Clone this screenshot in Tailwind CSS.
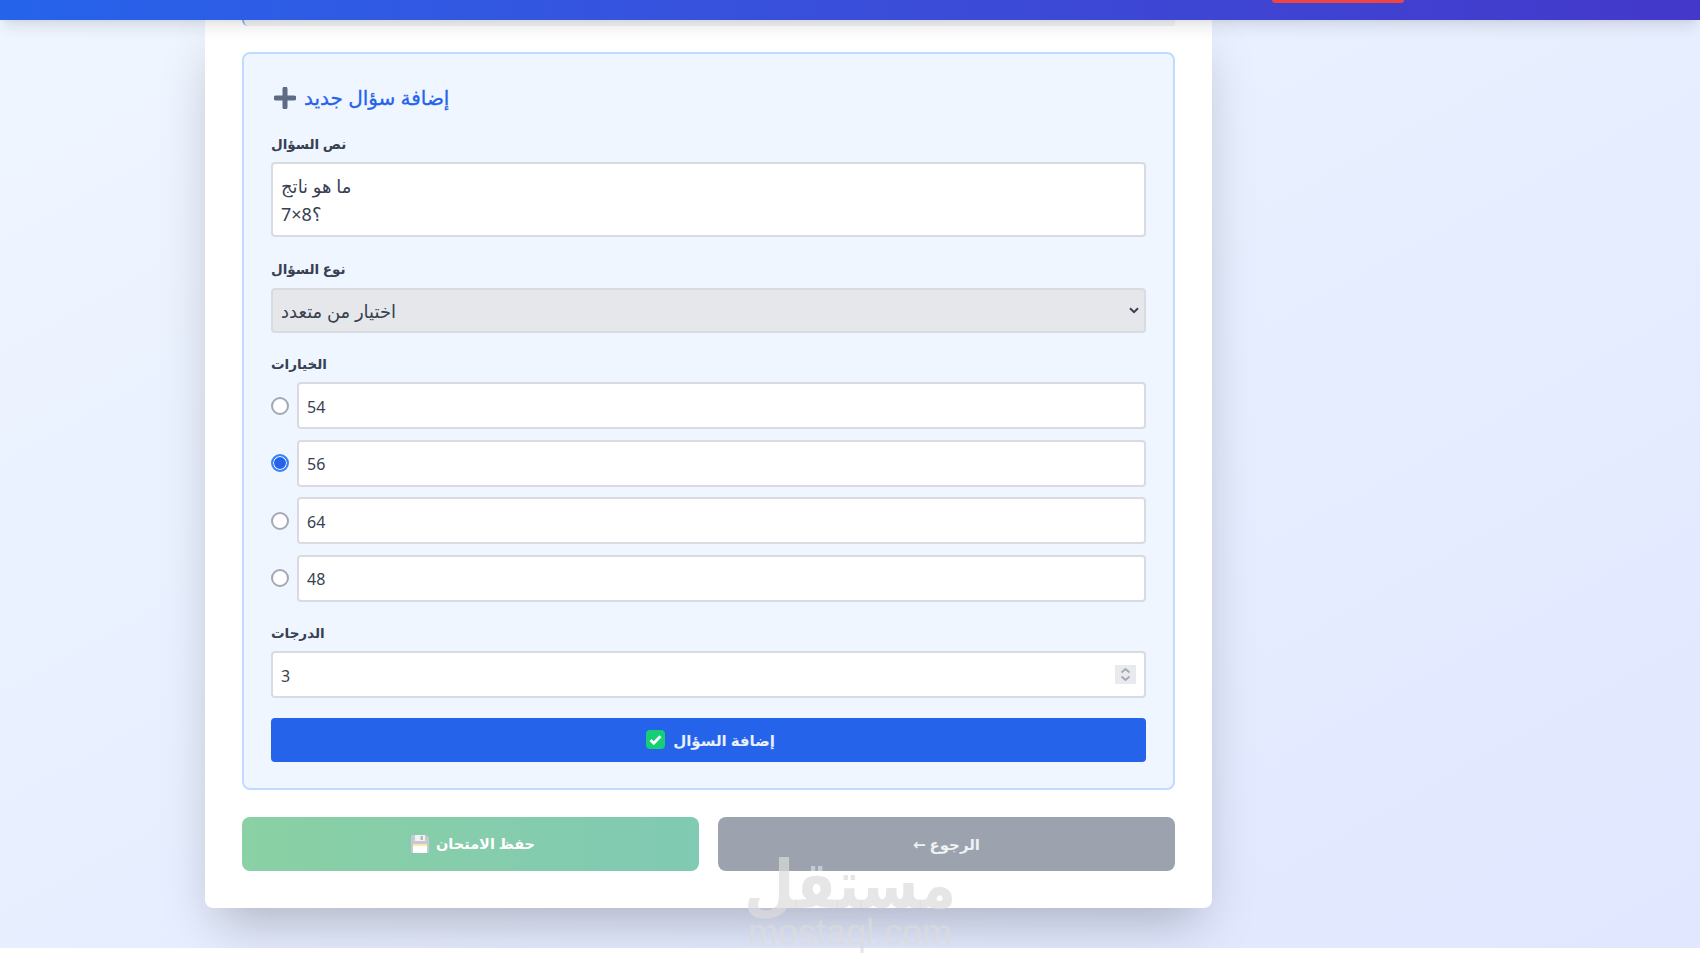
<!DOCTYPE html>
<html lang="ar">
<head>
  <meta charset="utf-8" />
  <title>إضافة سؤال جديد</title>
  <script src="https://cdn.jsdelivr.net/npm/@tailwindcss/browser@4"></script>
</head>
<body class="bg-white font-['Noto_Sans','DejaVu_Sans',sans-serif] text-[#374151]">
  <div class="relative h-[970px] overflow-hidden">
  <div class="h-[948px] overflow-hidden bg-gradient-to-br from-[#eff6ff] to-[#e0e7ff]">
    <!-- الشريط العلوي -->
    <header class="relative z-10 flex h-5 bg-gradient-to-r from-[#2563eb] to-[#4338ca] shadow-lg">
      <div class="ml-[1272px] h-[3px] w-[132px] rounded-b bg-[#ef4444]"></div>
    </header>

    <main class="ml-[205px] w-[1007px] rounded-b-lg bg-white px-[37px] pb-[37px] shadow-2xl">
      <div class="mb-[26px] h-[6px] rounded-bl-lg border-l-2 border-[#93b4f5] bg-[#f3f4f6]"></div>

      <section class="rounded-lg border-2 border-[#bfdbfe] bg-[#eff6ff] px-[27px] pb-[26px] pt-[28px]">
        <h3 class="flex h-8 items-center gap-2 pl-[3px] text-xl font-medium text-[#2563eb] [-webkit-text-stroke:0.3px]">
          <svg class="h-[22px] w-[22px] text-[#5f6b85]" viewBox="0 0 22 22" fill="currentColor"><path d="M8.5 2a2 2 0 0 1 5 0v6.5H20a2.5 2.5 0 0 1 0 5h-6.500V20a2.500 2.500 0 0 1-5 0v-6.500H2a2.500 2.500 0 0 1 0-5h6.500z"/></svg>
          <span>إضافة سؤال جديد</span>
        </h3>

        <label class="mt-5 block h-5 text-[13.5px] font-bold leading-5">نص السؤال</label>
        <textarea rows="2" class="mt-2 block h-[75px] w-full resize-none overflow-hidden rounded border-2 border-[#d9dbe1] bg-white px-2 pb-0 pt-2 text-lg leading-7 outline-none">ما هو ناتج
7×8؟</textarea>

        <label class="mt-[22px] block h-5 text-[13.5px] font-bold leading-5">نوع السؤال</label>
        <div class="relative mt-[9px]">
          <select class="block h-[45px] w-full appearance-none rounded border-2 border-[#d9dbe1] bg-[#e5e7eb] px-2 text-lg">
            <option>اختيار من متعدد</option>
          </select>
          <svg class="pointer-events-none absolute right-[7px] top-[19px] h-[7px] w-[10px]" viewBox="0 0 10 7"><path d="M1 1.200l4 4 4-4" fill="none" stroke="#374151" stroke-width="2"/></svg>
        </div>

        <label class="mt-[21px] block h-5 text-[13.5px] font-bold leading-5">الخيارات</label>
        <div class="mt-2 flex flex-col gap-[10.67px]">
          <div class="flex items-center gap-2">
            <input type="radio" name="answer" class="h-[18px] w-[18px] shrink-0 appearance-none rounded-full border-2 border-[#a3a8b4] bg-white checked:border-[#3b82f6] checked:bg-[#2563eb] checked:shadow-[inset_0_0_0_1px_#fff]" />
            <input type="text" value="54" class="h-[47px] w-full rounded border-2 border-[#d9dbe1] bg-white px-2 pt-[2px] text-base outline-none" />
          </div>
          <div class="flex items-center gap-2">
            <input type="radio" name="answer" checked class="h-[18px] w-[18px] shrink-0 appearance-none rounded-full border-2 border-[#a3a8b4] bg-white checked:border-[#3b82f6] checked:bg-[#2563eb] checked:shadow-[inset_0_0_0_1px_#fff]" />
            <input type="text" value="56" class="h-[47px] w-full rounded border-2 border-[#d9dbe1] bg-white px-2 pt-[2px] text-base outline-none" />
          </div>
          <div class="flex items-center gap-2">
            <input type="radio" name="answer" class="h-[18px] w-[18px] shrink-0 appearance-none rounded-full border-2 border-[#a3a8b4] bg-white checked:border-[#3b82f6] checked:bg-[#2563eb] checked:shadow-[inset_0_0_0_1px_#fff]" />
            <input type="text" value="64" class="h-[47px] w-full rounded border-2 border-[#d9dbe1] bg-white px-2 pt-[2px] text-base outline-none" />
          </div>
          <div class="flex items-center gap-2">
            <input type="radio" name="answer" class="h-[18px] w-[18px] shrink-0 appearance-none rounded-full border-2 border-[#a3a8b4] bg-white checked:border-[#3b82f6] checked:bg-[#2563eb] checked:shadow-[inset_0_0_0_1px_#fff]" />
            <input type="text" value="48" class="h-[47px] w-full rounded border-2 border-[#d9dbe1] bg-white px-2 pt-[2px] text-base outline-none" />
          </div>
        </div>

        <label class="mt-[21px] block h-5 text-[13.5px] font-bold leading-5">الدرجات</label>
        <div class="relative mt-2">
          <input type="number" value="3" class="block h-[47px] w-full appearance-none rounded border-2 border-[#d9dbe1] bg-white px-2 pt-[3px] text-base outline-none [&::-webkit-inner-spin-button]:appearance-none" />
          <!-- أسهم حقل الرقم -->
          <svg class="absolute right-[10px] top-[14px] h-[19px] w-[21px]" viewBox="0 0 21 19"><rect width="21" height="19" fill="#e9eaee"/><path d="M6.500 7.500l4-3.500 4 3.500M6.500 11.500l4 3.500 4-3.500" fill="none" stroke="#a3a8b8" stroke-width="1.800"/></svg>
        </div>

        <button class="mt-5 flex h-[44px] w-full items-center justify-center gap-2 rounded bg-[#2563eb] pl-1 text-[15px] font-bold text-white/90">
          <svg class="h-[19px] w-[19px]" viewBox="0 0 19 19"><rect width="19" height="19" rx="4" fill="#16cf74"/><path d="M4.500 10l3.200 3.200 6.800-7" fill="none" stroke="#fff" stroke-width="2.800"/></svg>
          <span>إضافة السؤال</span>
        </button>
      </section>

      <div class="mt-[27px] grid grid-cols-2 gap-[19px]">
        <button class="flex h-[54px] items-center justify-center gap-[6px] rounded-lg bg-gradient-to-r from-[#16a34a] to-[#059669] pl-1 text-[14.5px] font-bold text-white opacity-50">
          <svg class="h-5 w-5" viewBox="0 0 20 20"><path d="M2 1h14l3 3v14a1 1 0 0 1-1 1H2a1 1 0 0 1-1-1V2a1 1 0 0 1 1-1z" fill="#8a94a6"/><rect x="5" y="1" width="10" height="6" fill="#e5e7eb"/><rect x="10.500" y="2" width="2.500" height="4" fill="#6b7280"/><rect x="3" y="10" width="14" height="9" fill="#fff"/><rect x="3" y="10" width="14" height="2" fill="#fcd34d"/></svg>
          <span>حفظ الامتحان</span>
        </button>
        <button class="h-[54px] rounded-lg bg-[#9ca3af] text-[15px] font-bold text-white/85">← الرجوع</button>
      </div>
    </main>
  </div>

  <!-- العلامة المائية -->
  <div class="pointer-events-none absolute left-[748px] top-[860px] z-20 flex w-[204px] flex-col items-center text-[#dcdcdc]/70">
    <span class="h-[46px] scale-y-[1.15] text-[58px] font-bold leading-[46px]">مستقل</span>
    <span class="mt-[10px] font-['Liberation_Sans'] text-[36px] leading-[34px]">mostaql.com</span>
  </div>
  </div>
</body>
</html>
